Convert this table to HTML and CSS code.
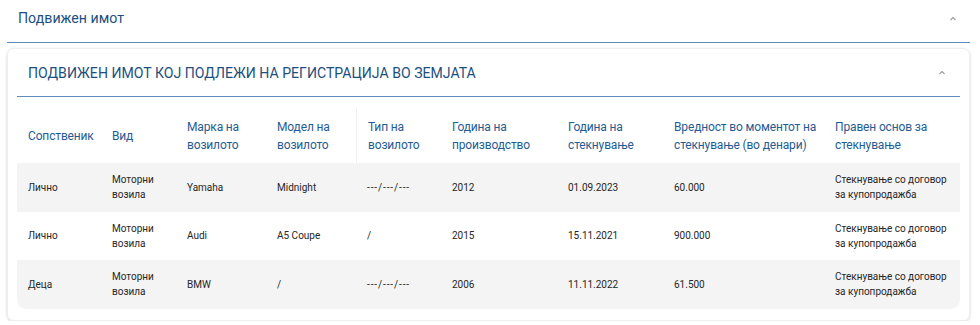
FILE: index.html
```html
<!DOCTYPE html>
<html lang="mk">
<head>
<meta charset="utf-8">
<link rel="stylesheet" href="styles.css">
</head>
<body>
<div class="page">
  <div class="section-head">
    <span class="section-title">Подвижен имот</span>
    <svg class="chev" width="8" height="5" viewBox="0 0 8 5"><path d="M1.5 4 L4 1.5 L6.5 4" fill="none" stroke="#999" stroke-width="1.1"/></svg>
  </div>
  <div class="card">
    <div class="card-head">
      <span class="card-title">ПОДВИЖЕН ИМОТ КОЈ ПОДЛЕЖИ НА РЕГИСТРАЦИЈА ВО ЗЕМЈАТА</span>
      <svg class="chev" width="8" height="5" viewBox="0 0 8 5"><path d="M1.5 4 L4 1.5 L6.5 4" fill="none" stroke="#999" stroke-width="1.1"/></svg>
    </div>
    <table class="grid">
      <colgroup>
        <col style="width:84px"><col style="width:75px"><col style="width:90px"><col style="width:90px"><col style="width:85px"><col style="width:116px"><col style="width:106px"><col style="width:161px"><col style="width:136px">
      </colgroup>
      <thead>
        <tr>
          <th>Сопственик</th>
          <th>Вид</th>
          <th>Марка на возилото</th>
          <th>Модел на возилото</th>
          <th class="divider">Тип на возилото</th>
          <th>Година на производство</th>
          <th>Година на стекнување</th>
          <th>Вредност во моментот на стекнување (во денари)</th>
          <th>Правен основ за стекнување</th>
        </tr>
      </thead>
      <tbody>
        <tr class="alt">
          <td>Лично</td><td>Моторни возила</td><td>Yamaha</td><td>Midnight</td><td><span class="dash">---/---/---</span></td><td>2012</td><td>01.09.2023</td><td>60.000</td><td>Стекнување со договор за купопродажба</td>
        </tr>
        <tr>
          <td>Лично</td><td>Моторни возила</td><td>Audi</td><td>A5 Coupe</td><td>/</td><td>2015</td><td>15.11.2021</td><td>900.000</td><td>Стекнување со договор за купопродажба</td>
        </tr>
        <tr class="alt last">
          <td>Деца</td><td>Моторни возила</td><td>BMW</td><td>/</td><td><span class="dash">---/---/---</span></td><td>2006</td><td>11.11.2022</td><td>61.500</td><td>Стекнување со договор за купопродажба</td>
        </tr>
      </tbody>
    </table>
  </div>
</div>
</body>
</html>
```
FILE: styles.css
```css
* { box-sizing: border-box; }
html, body { margin: 0; padding: 0; background: #fff; }
body { font-family: Roboto, "Noto Sans", sans-serif; color: #2b2b2b; }
.page { padding: 0 10px 0 7px; }
.section-head {
  height: 43px;
  display: flex;
  align-items: center;
  justify-content: space-between;
  padding: 0 13px 6px 11px;
  border-bottom: 1.5px solid #5f8cba;
}
.section-title { font-size: 14.2px; color: #1d4f7e; }
.chev { display: block; }
.card {
  margin-top: 5px;
  border: 1px solid #eeeeee;
  border-radius: 7px;
  box-shadow: 0 1px 3px rgba(0,0,0,0.18);
  padding: 0 9px 11px 9px;
}
.card-head {
  height: 48px;
  display: flex;
  align-items: center;
  justify-content: space-between;
  padding: 0 14px 0 11px;
  border-bottom: 1.5px solid #5f8cba;
}
.card-title { font-size: 14.1px; color: #1d4f7e; }
.grid {
  margin-top: 11px;
  width: 943px;
  border-collapse: separate;
  border-spacing: 0;
  table-layout: fixed;
}
.grid th {
  text-align: left;
  font-weight: 400;
  font-size: 12px;
  letter-spacing: -0.15px;
  line-height: 18px;
  color: #1f5c93;
  padding: 0 4px 0 11px;
  height: 55px;
  vertical-align: middle;
}
.grid th.divider { border-left: 1px solid #f0f0f0; }
.grid td {
  font-size: 10px;
  line-height: 15px;
  color: #262626;
  padding: 0 4px 0 11px;
  height: 48.5px;
  vertical-align: middle;
}
.dash { letter-spacing: 0.9px; }
.grid tr.alt td { background: #f4f4f4; }
.grid tr.last td:first-child { border-bottom-left-radius: 9px; }
.grid tr.last td:last-child { border-bottom-right-radius: 9px; }
```
